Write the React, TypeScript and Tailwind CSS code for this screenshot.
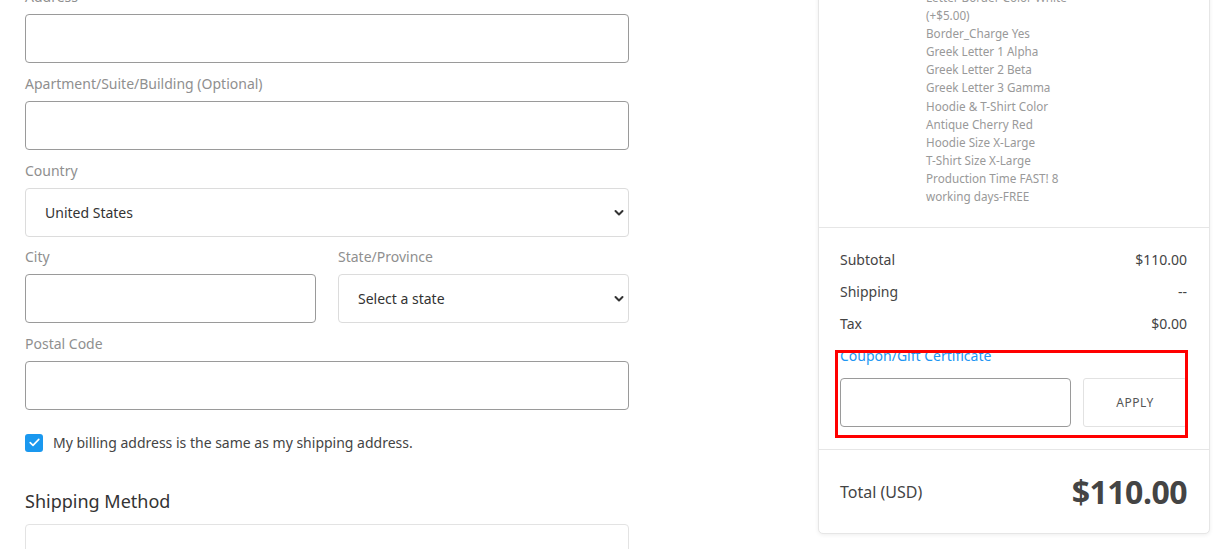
import React from "react";

const font = "font-['Noto_Sans','Liberation_Sans',sans-serif]";

const Label = ({ children }: { children: React.ReactNode }) => (
  <div className="text-[14px] leading-[18px] text-[#8f8f8f] mb-[8px]">{children}</div>
);

const TextField = ({ label, className = "mb-[12px]" }: { label: string; className?: string }) => (
  <div className={className}>
    <Label>{label}</Label>
    <input className="w-full h-[49px] rounded-[4px] border border-[#9a9a9a] bg-white px-4 outline-none" />
  </div>
);

const Chevron = () => (
  <svg width="10" height="7" viewBox="0 0 10 7" className="pointer-events-none absolute right-[5px] top-1/2 -translate-y-1/2">
    <path d="M1.5 1.5 5 5l3.5-3.5" fill="none" stroke="#333" strokeWidth="2" strokeLinecap="round" strokeLinejoin="round" />
  </svg>
);

const SelectField = ({ label, value, className = "mb-[12px]" }: { label: string; value: string; className?: string }) => (
  <div className={className}>
    <Label>{label}</Label>
    <div className="relative">
      <select
        defaultValue={value}
        className="w-full h-[49px] appearance-none rounded-[4px] border border-[#dcdcdc] bg-white pl-[19px] pr-8 text-[14px] text-[#333] outline-none"
      >
        <option>{value}</option>
      </select>
      <Chevron />
    </div>
  </div>
);

const details = [
  "Letter Border Color White",
  "(+$5.00)",
  "Border_Charge Yes",
  "Greek Letter 1 Alpha",
  "Greek Letter 2 Beta",
  "Greek Letter 3 Gamma",
  "Hoodie & T-Shirt Color",
  "Antique Cherry Red",
  "Hoodie Size X-Large",
  "T-Shirt Size X-Large",
  "Production Time FAST! 8",
  "working days-FREE",
];

const SummaryRow = ({ label, value }: { label: string; value: string }) => (
  <div className="flex justify-between text-[14px] leading-[20px] text-[#444]">
    <span>{label}</span>
    <span>{value}</span>
  </div>
);

export default function App() {
  return (
    <div className={`${font} bg-white w-[1220px] h-[549px] overflow-hidden`}>
      <div className="flex justify-between items-start pl-[25px] pr-[10px]">
        {/* checkout form */}
        <div className="w-[604px] -mt-[12px]">
          <TextField label="Address" />
          <TextField label="Apartment/Suite/Building (Optional)" />
          <SelectField label="Country" value="United States" className="mb-[11px]" />
          <div className="flex gap-[22px]">
            <TextField label="City" className="w-[291px] mb-[12px]" />
            <SelectField label="State/Province" value="Select a state" className="flex-1 mb-[12px]" />
          </div>
          <TextField label="Postal Code" />

          <label className="mt-[22px] flex items-center gap-[10px]">
            <span className="flex h-[18px] w-[18px] items-center justify-center rounded-[3px] bg-[#1a98ef]">
              <svg width="11" height="9" viewBox="0 0 11 9">
                <path d="M1.2 4.6 4 7.4 9.8 1.4" fill="none" stroke="#fff" strokeWidth="1.6" strokeLinecap="round" strokeLinejoin="round" />
              </svg>
            </span>
            <span className="text-[14px] text-[#444]">My billing address is the same as my shipping address.</span>
          </label>

          <h2 className="mt-[36px] text-[18px] leading-[24px] text-[#333]">Shipping Method</h2>
          <div className="mt-[11px] h-[60px] rounded-[4px] border border-[#e3e3e3]" />
        </div>

        {/* order summary */}
        <div className="w-[392px] -mt-[13px] rounded-[5px] border border-[#e6e6e6] bg-white shadow-[0_1px_4px_rgba(0,0,0,0.07)]">
          <div className="pl-[107px] pb-[22px] text-[11.7px] leading-[18.1px] text-[#999]">
            {details.map((d) => (
              <div key={d}>{d}</div>
            ))}
          </div>

          <div className="border-t border-[#e6e6e6] pl-[21px] pr-[22px] pt-[22px] pb-[22px] flex flex-col gap-[12px]">
            <SummaryRow label="Subtotal" value="$110.00" />
            <SummaryRow label="Shipping" value="--" />
            <SummaryRow label="Tax" value="$0.00" />
            <div className="relative">
              <div className="text-[14px] leading-[20px] text-[#2196f3]">Coupon/Gift Certificate</div>
              <div className="mt-[12px] flex gap-[12px]">
                <input className="h-[49px] w-[231px] rounded-[4px] border border-[#9a9a9a] px-3 outline-none" />
                <button className="h-[49px] flex-1 rounded-[3px] border border-[#e2e2e2] bg-white text-[12px] tracking-[0.5px] text-[#555]">
                  APPLY
                </button>
              </div>
              <div className="pointer-events-none absolute -left-[5px] -right-[1px] top-[4px] -bottom-[11px] border-[3px] border-[#ff0000]" />
            </div>
          </div>

          <div className="border-t border-[#e6e6e6] pl-[21px] pr-[22px] h-[84px] flex items-center justify-between">
            <span className="text-[16px] text-[#444]">Total (USD)</span>
            <span className="text-[32px] font-bold tracking-[-0.5px] text-[#444]">$110.00</span>
          </div>
        </div>
      </div>
    </div>
  );
}
